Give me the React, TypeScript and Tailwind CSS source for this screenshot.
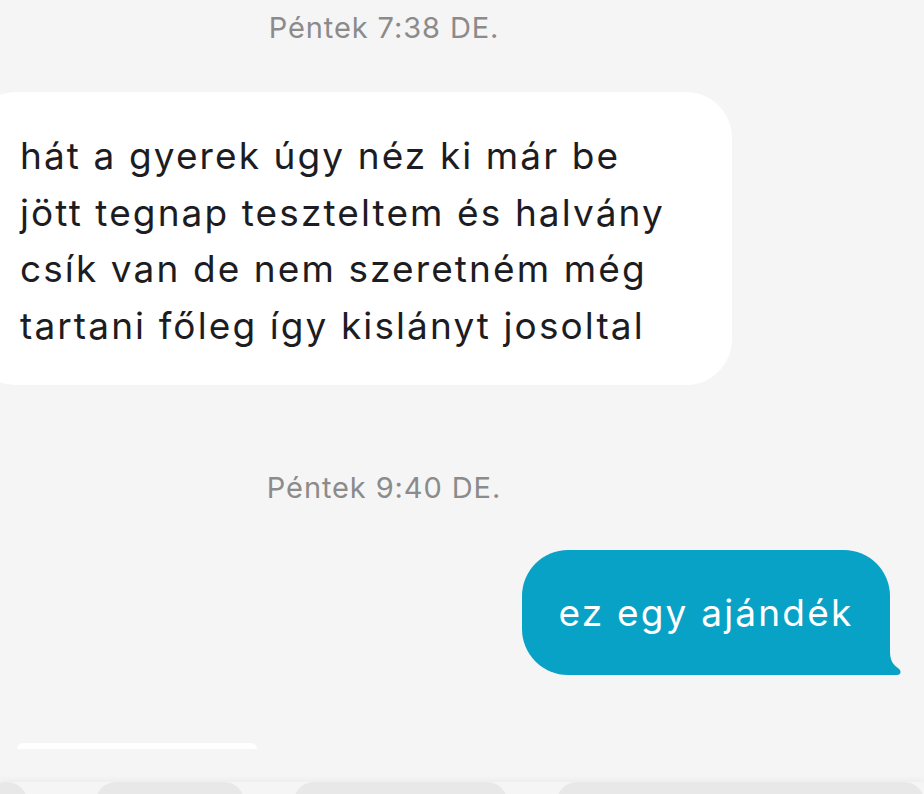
import React from "react";

const font = { fontFamily: "Inter, 'Noto Sans', sans-serif" };

export default function App() {
  return (
    <div
      className="w-[924px] h-[794px] overflow-hidden bg-[#f5f5f5] flex flex-col"
      style={font}
    >
      <div className="w-[768px] flex justify-center pt-[11px] h-[46px]">
        <span className="text-[29px] leading-[34px] tracking-[0.9px] text-[#8b8b8b]">
          Péntek 7:38 DE.
        </span>
      </div>

      <div className="mt-[46px] ml-[-30px] w-[762px] h-[293px] bg-white rounded-[46px] pl-[50px] pt-[36px]">
        <p className="text-[37px] leading-[56.5px] tracking-[2.1px] text-[#1c1c22]">
          hát a gyerek úgy néz ki már be
          <br />
          jött tegnap teszteltem és halvány
          <br />
          csík van de nem szeretném még
          <br />
          tartani főleg így kislányt josoltal
        </p>
      </div>

      <div className="w-[768px] flex justify-center mt-[86px] h-[34px]">
        <span className="text-[29px] leading-[34px] tracking-[0.9px] text-[#8b8b8b]">
          Péntek 9:40 DE.
        </span>
      </div>

      <div className="flex justify-end pr-[34px] mt-[45px]">
        <div className="relative">
          <div className="w-[368px] h-[125px] bg-[#08a2c7] rounded-[46px] rounded-br-none flex items-center justify-center">
            <span className="text-[37px] tracking-[2.2px] text-white leading-none">
              ez egy ajándék
            </span>
          </div>
          <svg
            className="absolute right-[-12px] bottom-0"
            width="14"
            height="24"
            viewBox="0 0 14 24"
          >
            <path
              d="M0 0 L2 0 C2 8 4 13 10 17 C14 20 13 24 9 24 L0 24 Z"
              fill="#08a2c7"
            />
          </svg>
        </div>
      </div>

      <div className="mt-[68px] ml-[17px] w-[240px] h-[6px] bg-white rounded-t-[6px] blur-[0.5px]" />

      <div className="mt-[33px] h-[12px] flex gap-0 shadow-[0_-3px_6px_rgba(0,0,0,0.03)]">
        <div className="w-[44px] ml-[-16px] h-[40px] bg-[#e8e8e8] rounded-t-[20px]" />
        <div className="w-[154px] ml-[69px] h-[40px] bg-[#e8e8e8] rounded-t-[20px]" />
        <div className="w-[220px] ml-[50px] h-[40px] bg-[#e8e8e8] rounded-t-[20px]" />
        <div className="w-[380px] ml-[50px] h-[40px] bg-[#e8e8e8] rounded-t-[20px]" />
      </div>
    </div>
  );
}
